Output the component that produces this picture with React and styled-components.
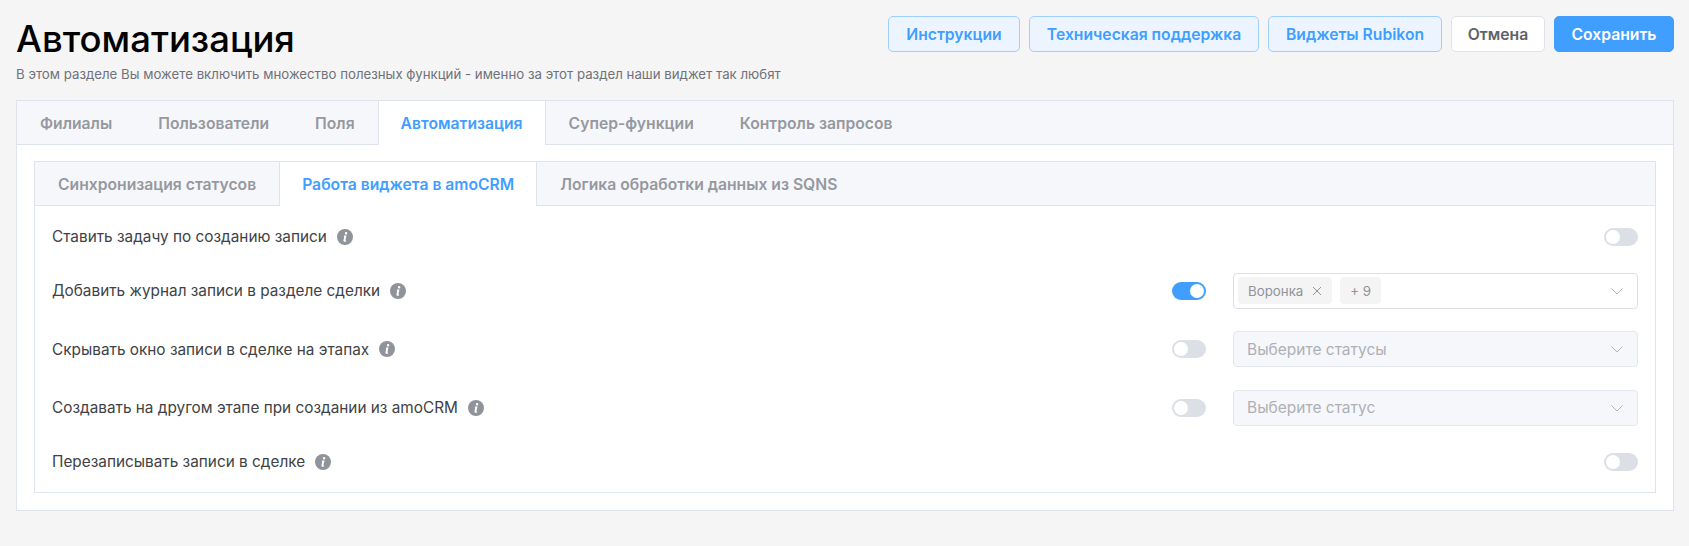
import React from "react";
import styled, { createGlobalStyle } from "styled-components";

const Global = createGlobalStyle`
  html, body { margin: 0; padding: 0; background: #f5f5f5; }
  body { font-family: Inter, "Noto Sans", sans-serif; width: 1689px; height: 546px; overflow: hidden; }
  * { box-sizing: border-box; }
`;

const Page = styled.div`
  padding: 16px 15px 0 16px;
`;
const Header = styled.header`
  display: flex;
  justify-content: space-between;
  align-items: flex-start;
  height: 84px;
`;
const Heading = styled.div`
  display: flex;
  flex-direction: column;
`;
const Title = styled.h1`
  margin: 0;
  font-size: 36.5px;
  line-height: 46px;
  font-weight: 500;
  color: #000;
`;
const Subtitle = styled.p`
  margin: 3px 0 0;
  font-size: 13.25px;
  line-height: 18px;
  color: #6f7278;
`;
const Actions = styled.div`
  display: flex;
  gap: 9px;
`;
const Button = styled.button`
  height: 36px;
  width: ${(p) => p.$w}px;
  padding: 0;
  border-radius: 5px;
  font: 600 15.7px Inter, sans-serif;
  border: 1px solid ${(p) => (p.$kind === "light" ? "#a0cfff" : p.$kind === "primary" ? "#409eff" : "#dfe2e8")};
  background: ${(p) => (p.$kind === "light" ? "#ecf5ff" : p.$kind === "primary" ? "#409eff" : "#fff")};
  color: ${(p) => (p.$kind === "light" ? "#409eff" : p.$kind === "primary" ? "#fff" : "#606266")};
`;
const Card = styled.section`
  background: #fff;
  border: 1px solid #dfe3ec;
  height: ${(p) => p.$h}px;
`;
const InnerCard = styled(Card)`
  margin: 16px 17px 0 17px;
`;
const Tabs = styled.div`
  display: flex;
  height: 44px;
  background: #f5f7fa;
  border-bottom: 1px solid #dfe3ec;
`;
const Tab = styled.div`
  height: 44px;
  padding: 0 ${(p) => (p.$active ? 22 : 23)}px;
  display: flex;
  align-items: center;
  font-size: 15.7px;
  font-weight: 600;
  color: ${(p) => (p.$active ? "#409eff" : "#96989f")};
  ${(p) =>
    p.$active &&
    `background:#fff; border-left:1px solid #dfe3ec; border-right:1px solid #dfe3ec;`}
`;
const List = styled.div`
  padding: 17.25px 17px 0 17px;
  display: flex;
  flex-direction: column;
  gap: 22.5px;
`;
const Row = styled.div`
  display: flex;
  align-items: center;
  min-height: ${(p) => (p.$tall ? 36 : 27)}px;
`;
const Label = styled.span`
  display: flex;
  align-items: center;
  gap: 10px;
  flex: 1;
  font-size: 15.35px;
  color: #404245;
`;
const Toggle = styled.span`
  position: relative;
  display: block;
  width: 34px;
  height: 18px;
  border-radius: 9px;
  background: ${(p) => (p.$on ? "#409eff" : "#dcdfe6")};
  &::after {
    content: "";
    position: absolute;
    top: 2px;
    left: ${(p) => (p.$on ? 18 : 2)}px;
    width: 14px;
    height: 14px;
    border-radius: 50%;
    background: #fff;
  }
`;
const Select = styled.div`
  width: 405px;
  height: 36px;
  margin-left: 27px;
  padding: 0 13px 0 ${(p) => (p.$disabled ? 13 : 4)}px;
  display: flex;
  align-items: center;
  gap: 8px;
  border-radius: 4px;
  border: 1px solid ${(p) => (p.$disabled ? "#e4e7ed" : "#dcdfe6")};
  background: ${(p) => (p.$disabled ? "#f5f7fa" : "#fff")};
  font-size: 15.5px;
  color: #aeb0b6;
`;
const Placeholder = styled.span`
  flex: 1;
`;
const Tag = styled.span`
  height: 27px;
  padding: 0 10px;
  display: flex;
  align-items: center;
  gap: 9px;
  border-radius: 4px;
  background: #f4f4f5;
  font-size: 13.3px;
  color: #909399;
`;
const Spacer = styled.span`
  flex: 1;
`;

const Info = () => (
  <svg width="16" height="16" viewBox="0 0 16 16">
    <circle cx="8" cy="8" r="8" fill="#909399" />
    <path d="M9.1 2.9a1.25 1.25 0 1 1-.01 2.5 1.25 1.25 0 0 1 .01-2.5ZM7 6.4h2.5l-1.1 4.9c-.05.3.2.35.8.2l-.15.9c-1.4.5-2.8.3-2.6-1l.8-3.9-.5-.1Z" fill="#fff" />
  </svg>
);
const Chevron = () => (
  <svg width="14" height="14" viewBox="0 0 14 14" fill="none" stroke="#b0b3b8" strokeWidth="1">
    <path d="M1.5 4.5l5.5 5.5 5.5-5.5" />
  </svg>
);
const Cross = () => (
  <svg width="10" height="10" viewBox="0 0 10 10" fill="none" stroke="#909399" strokeWidth="1">
    <path d="M1 1l8 8M9 1l-8 8" />
  </svg>
);

const OUTER = ["Филиалы", "Пользователи", "Поля", "Автоматизация", "Супер-функции", "Контроль запросов"];
const INNER = ["Синхронизация статусов", "Работа виджета в amoCRM", "Логика обработки данных из SQNS"];

export default function App() {
  return (
    <Page>
      <Global />
      <Header>
        <Heading>
          <Title>Автоматизация</Title>
          <Subtitle>В этом разделе Вы можете включить множество полезных функций - именно за этот раздел наши виджет так любят</Subtitle>
        </Heading>
        <Actions>
          <Button $kind="light" $w={132}>Инструкции</Button>
          <Button $kind="light" $w={230}>Техническая поддержка</Button>
          <Button $kind="light" $w={174}>Виджеты Rubikon</Button>
          <Button $w={94}>Отмена</Button>
          <Button $kind="primary" $w={120}>Сохранить</Button>
        </Actions>
      </Header>
      <Card $h={411}>
        <Tabs>
          {OUTER.map((t) => (
            <Tab key={t} $active={t === "Автоматизация"}>{t}</Tab>
          ))}
        </Tabs>
        <InnerCard $h={332}>
          <Tabs>
            {INNER.map((t) => (
              <Tab key={t} $active={t === "Работа виджета в amoCRM"}>{t}</Tab>
            ))}
          </Tabs>
          <List>
            <Row>
              <Label>Ставить задачу по созданию записи <Info /></Label>
              <Toggle />
            </Row>
            <Row $tall>
              <Label>Добавить журнал записи в разделе сделки <Info /></Label>
              <Toggle $on />
              <Select>
                <Tag>Воронка <Cross /></Tag>
                <Tag>+ 9</Tag>
                <Spacer />
                <Chevron />
              </Select>
            </Row>
            <Row $tall>
              <Label>Скрывать окно записи в сделке на этапах <Info /></Label>
              <Toggle />
              <Select $disabled>
                <Placeholder>Выберите статусы</Placeholder>
                <Chevron />
              </Select>
            </Row>
            <Row $tall>
              <Label>Создавать на другом этапе при создании из amoCRM <Info /></Label>
              <Toggle />
              <Select $disabled>
                <Placeholder>Выберите статус</Placeholder>
                <Chevron />
              </Select>
            </Row>
            <Row>
              <Label>Перезаписывать записи в сделке <Info /></Label>
              <Toggle />
            </Row>
          </List>
        </InnerCard>
      </Card>
    </Page>
  );
}
